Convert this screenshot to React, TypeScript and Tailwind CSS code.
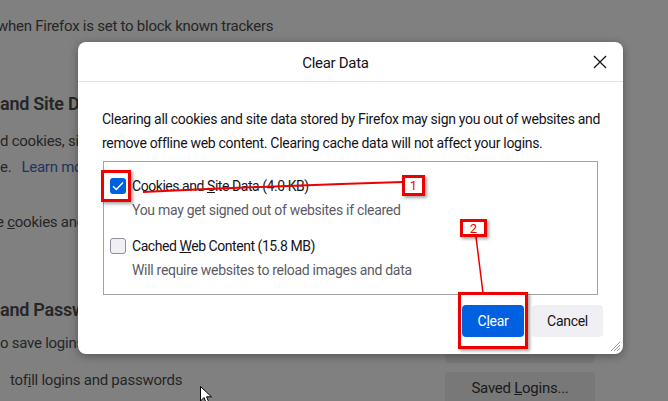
import React from "react";

const Check = () => (
  <svg width="12" height="10" viewBox="0 0 12 10" fill="none">
    <path d="M1 5.2 L4.3 8.4 L11 1.4" stroke="white" strokeWidth="1.4" />
  </svg>
);

const CheckRow = ({
  checked,
  label,
  hint,
}: {
  checked: boolean;
  label: React.ReactNode;
  hint: string;
}) => (
  <div className="flex flex-col">
    <div className="flex items-center h-[20px]">
      {checked ? (
        <span className="w-[16px] h-[16px] rounded-[3px] bg-[#0061e0] flex items-center justify-center">
          <Check />
        </span>
      ) : (
        <span className="w-[16px] h-[16px] rounded-[3px] bg-[#f0f0f4] border border-[#8f8f9d]" />
      )}
      <span className="ml-[6px] text-[#15141a] tracking-[-0.45px]">{label}</span>
    </div>
    <div className="ml-[22px] mt-[4px] h-[20px] leading-[20px] text-[#5b5b66]">{hint}</div>
  </div>
);

const Dialog = () => (
  <div className="absolute left-[78px] top-[42px] w-[545px] h-[312px] bg-white rounded-[8px] shadow-[0_2px_10px_rgba(0,0,0,0.35)] flex flex-col text-[14px] leading-[24px] tracking-[-0.3px]">
    {/* Header */}
    <div className="h-[40px] flex items-center justify-center pr-[30px] border-b border-[#e0e0e6] relative">
      <span className="text-[15px] mt-[2px] text-[#15141a]">Clear Data</span>
      <svg className="absolute right-[16px] top-[13px]" width="14" height="14" viewBox="0 0 14 14">
        <path d="M1 1 L13 13 M13 1 L1 13" stroke="#15141a" strokeWidth="1.3" />
      </svg>
    </div>

    {/* Body */}
    <div className="px-[24px] pt-[25px] text-[#15141a] whitespace-nowrap">
      <p>Clearing all cookies and site data stored by Firefox may sign you out of websites and</p>
      <p>remove offline web content. Clearing cache data will not affect your logins.</p>
    </div>

    <div className="mx-[25px] mt-[6px] h-[134px] border border-[#a3a3a3] pl-[6px] pt-[14px] flex flex-col gap-[16px] whitespace-nowrap">
      <CheckRow
        checked
        label={
          <>
            Cookies and <u>S</u>ite Data (4.0 KB)
          </>
        }
        hint="You may get signed out of websites if cleared"
      />
      <CheckRow
        checked={false}
        label={
          <>
            Cached <u>W</u>eb Content (15.8 MB)
          </>
        }
        hint="Will require websites to reload images and data"
      />
    </div>

    {/* Buttons */}
    <div className="flex justify-end gap-[8px] mt-[10px] pr-[20px]">
      <button className="w-[62px] h-[32px] rounded-[4px] bg-[#0061e0] text-white">
        C<u>l</u>ear
      </button>
      <button className="w-[71px] h-[32px] rounded-[4px] bg-[#f0f0f4] text-[#15141a]">Cancel</button>
    </div>

    <svg className="absolute right-[2px] bottom-[2px]" width="12" height="12" viewBox="0 0 12 12">
      <path d="M11 2 L2 11 M11 5 L5 11 M11 8 L8 11" stroke="#9a9a9a" strokeWidth="1" />
    </svg>
  </div>
);

const RedBox = ({ className, children }: { className: string; children?: React.ReactNode }) => (
  <div
    className={
      "absolute border-[3px] border-[#ee0000] shadow-[2px_2px_3px_rgba(0,0,0,0.35)] flex items-center justify-center text-[#ee0000] text-[13px] leading-none " +
      className
    }
  >
    {children}
  </div>
);

export default function App() {
  return (
    <div className="relative w-[668px] h-[401px] overflow-hidden bg-[#808080] font-['Roboto',sans-serif] text-[#262626]">
      {/* Dimmed page behind */}
      <div className="flex flex-col text-[15px] leading-[20px] tracking-[-0.25px] whitespace-nowrap">
        <div className="mt-[16px] -ml-[3px]">when Firefox is set to block known trackers</div>
        <div className="mt-[56px] text-[18px] leading-[24px] font-semibold">and Site Data</div>
        <div className="mt-[15px]">d cookies, site data, and cache</div>
        <div className="mt-[6px] flex">
          <span>e.</span>
          <span className="ml-[10px] text-[#1c3561]">Learn more</span>
        </div>
        <div className="mt-[35px] -ml-[4px]">
          e <u>c</u>ookies and site data
        </div>
        <div className="mt-[66px] text-[18px] leading-[24px] font-semibold">and Passwords</div>
        <div className="mt-[7px] flex items-start justify-between pr-[73px]">
          <span className="mt-[4px]">o save logins</span>
          <span className="w-[150px] h-[34px] rounded-[4px] bg-[#787878]" />
        </div>
        <div className="mt-[9px] flex items-start justify-between pr-[73px]">
          <span className="-mt-[2px] ml-[10px]">
            tof<u>i</u>ll logins and passwords
          </span>
          <span className="w-[150px] h-[32px] rounded-[4px] bg-[#787878] flex items-center justify-center text-[#1a1a1a]">
            <span>
              Saved <u>L</u>ogins...
            </span>
          </span>
        </div>
      </div>

      <Dialog />

      {/* Annotations */}
      <svg className="absolute inset-0 pointer-events-none" width="668" height="401">
        <path d="M143 192 Q 270 186 403 182" stroke="#ee0000" strokeWidth="2" fill="none" />
        <path d="M476 237 L483 293" stroke="#ee0000" strokeWidth="1.5" fill="none" />
      </svg>
      <RedBox className="left-[101px] top-[170px] w-[30px] h-[32px]" />
      <RedBox className="left-[402px] top-[175px] w-[23px] h-[21px]">1</RedBox>
      <RedBox className="left-[460px] top-[219px] w-[27px] h-[18px]">2</RedBox>
      <RedBox className="left-[458px] top-[292px] w-[70px] h-[57px]" />

      {/* Mouse pointer */}
      <svg className="absolute left-[200px] top-[386px]" width="14" height="20" viewBox="0 0 14 20">
        <path d="M0.5 0.5 L0.5 15 L4 11.5 L6.5 17.5 L9 16.5 L6.5 10.8 L11.5 10.8 Z" fill="white" stroke="black" strokeWidth="1" />
      </svg>
    </div>
  );
}
